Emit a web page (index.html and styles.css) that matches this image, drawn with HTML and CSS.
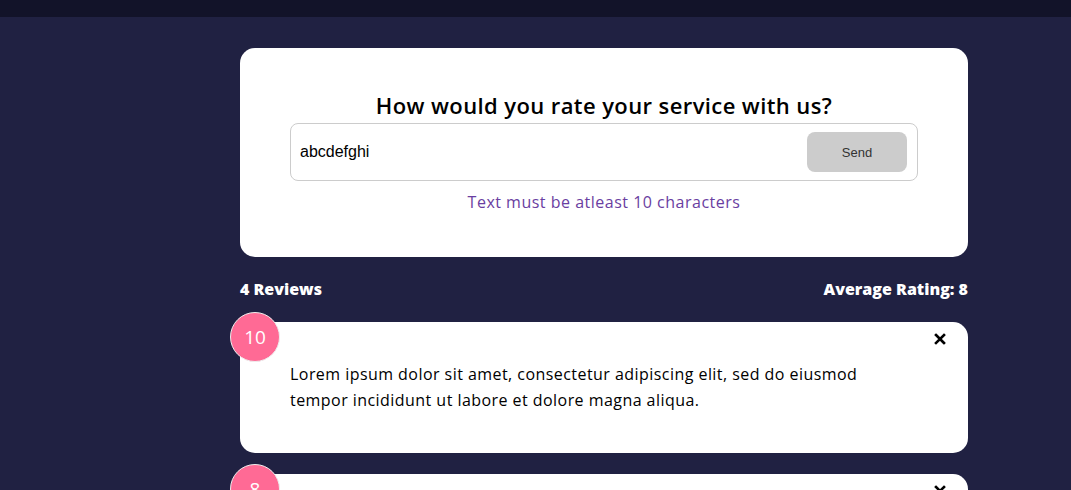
FILE: index.html
```html
<!DOCTYPE html>
<html lang="en">
<head>
<meta charset="utf-8">
<title>Feedback</title>
<link rel="stylesheet" href="styles.css">
</head>
<body>
<header class="topbar"></header>
<main class="container">
  <section class="card form-card">
    <h2 class="title">How would you rate your service with us?</h2>
    <div class="input-group">
      <input class="text-input" type="text" value="abcdefghi">
      <button class="send-btn" type="button">Send</button>
    </div>
    <div class="message">Text must be atleast 10 characters</div>
  </section>
  <div class="stats">
    <h4>4 Reviews</h4>
    <h4>Average Rating: 8</h4>
  </div>
  <div class="review card">
    <div class="badge">10</div>
    <button class="close" type="button">
      <svg width="12" height="12" viewBox="0 0 12 12"><path d="M2 2 L10 10 M10 2 L2 10" stroke="#000" stroke-width="2.6" stroke-linecap="square"/></svg>
    </button>
    <p class="review-text">Lorem ipsum dolor sit amet, consectetur adipiscing elit, sed do eiusmod tempor incididunt ut labore et dolore magna aliqua.</p>
  </div>
  <div class="review card">
    <div class="badge">8</div>
    <button class="close" type="button">
      <svg width="12" height="12" viewBox="0 0 12 12"><path d="M2 2 L10 10 M10 2 L2 10" stroke="#000" stroke-width="2.6" stroke-linecap="square"/></svg>
    </button>
    <p class="review-text">Lorem ipsum dolor sit amet, consectetur adipiscing elit, sed do eiusmod tempor incididunt ut labore et dolore magna aliqua.</p>
  </div>
</main>
</body>
</html>
```
FILE: styles.css
```css
* { box-sizing: border-box; }
html, body { margin: 0; padding: 0; }
body {
  background: #202142;
  font-family: "Open Sans", "DejaVu Sans", sans-serif;
  color: #000;
  overflow: hidden;
  height: 490px;
}
.topbar {
  height: 17px;
  background: #121329;
}
.container {
  width: 728px;
  margin: 31px 0 0 240px;
}
.card {
  background: #fff;
  border-radius: 15px;
}
.form-card {
  height: 209px;
  padding: 39px 50px 0;
}
.title {
  margin: 0;
  text-align: center;
  font-size: 22px;
  font-weight: 600;
  letter-spacing: 0.4px;
  line-height: 36px;
}
.input-group {
  display: flex;
  align-items: center;
  height: 58px;
  border: 1px solid #ccc;
  border-radius: 8px;
  padding: 0 10px 0 9px;
}
.text-input {
  flex: 1;
  border: none;
  outline: none;
  font-family: "Liberation Sans", Arial, sans-serif;
  font-size: 16px;
  color: #000;
  padding: 0;
  background: transparent;
}
.send-btn {
  width: 100px;
  height: 40px;
  border: none;
  border-radius: 8px;
  background: #ccc;
  color: #333;
  font-family: "Liberation Sans", Arial, sans-serif;
  font-size: 13px;
}
.message {
  margin-top: 10px;
  text-align: center;
  color: #6a3ea1;
  font-size: 16px;
  letter-spacing: 0.5px;
  line-height: 22px;
}
.stats {
  display: flex;
  justify-content: space-between;
  color: #fff;
  margin: 20px 0 21px;
}
.stats h4 {
  margin: 0;
  font-size: 16px;
  font-weight: 800;
  line-height: 24px;
}
.review {
  position: relative;
  height: 131px;
  padding: 39px 50px 0;
  margin-bottom: 21px;
}
.badge {
  position: absolute;
  top: -10px;
  left: -10px;
  width: 50px;
  height: 50px;
  border-radius: 50%;
  background: #ff6a95;
  border: 1px solid #eee;
  color: #fff;
  font-size: 19px;
  display: flex;
  align-items: center;
  justify-content: center;
}
.close {
  position: absolute;
  top: 11px;
  right: 22px;
  background: none;
  border: none;
  padding: 0;
  width: 12px;
  height: 12px;
  display: flex;
}
.review-text {
  margin: 0;
  font-size: 16px;
  letter-spacing: 0.45px;
  line-height: 26px;
}
```
